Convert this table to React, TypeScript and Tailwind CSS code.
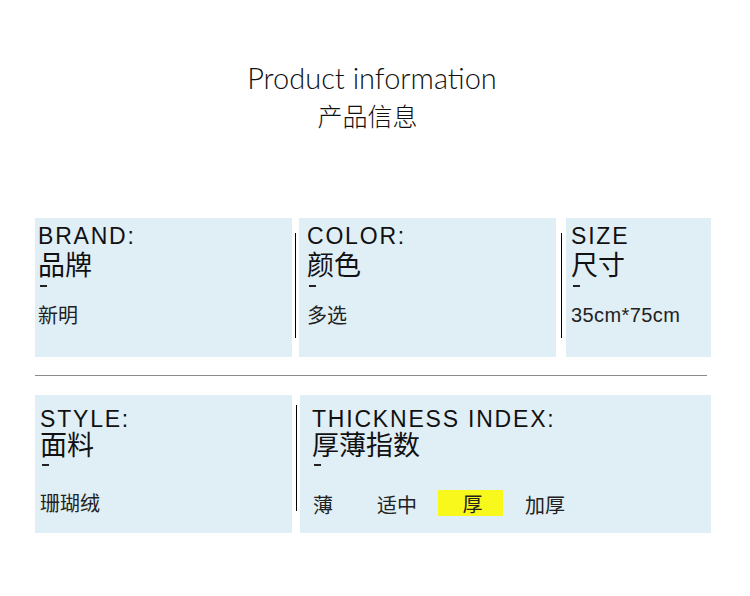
import React from "react";

const latin = "font-['Liberation_Sans',Arial,sans-serif]";
const cjk = "font-['Noto_Sans_CJK_SC','Noto_Sans',sans-serif]";

type PanelProps = {
  en: string;
  zh: string;
  value?: React.ReactNode;
  className: string;
  pad: string;
  row2?: boolean;
};

const Panel = ({ en, zh, value, className, pad, row2 }: PanelProps) => (
  <div className={`bg-[#e0eef6] text-[#111] ${className} ${pad} ${row2 ? "pt-[13px]" : "pt-[6px]"}`}>
    <div className={`${latin} text-[23px] tracking-[1.8px] ${row2 ? "leading-[22px]" : "leading-[24px]"}`}>{en}</div>
    <div className={`${cjk} text-[27px] leading-[27px] ${row2 ? "" : "mt-[2px]"}`}>{zh}</div>
    <div className={`flex items-center h-[12px] pl-[2px] ${row2 ? "mt-[2px]" : "mt-[3px]"}`}>
      <div className="w-[7px] h-[1.5px] bg-[#222]" />
    </div>
    <div className={row2 ? "mt-[20px]" : "mt-[11px]"}>{value}</div>
  </div>
);

const VLine = ({ w, top, h }: { w: string; top: string; h: string }) => (
  <div className={`flex justify-center ${w}`}>
    <div className={`w-px bg-black ${top} ${h}`} />
  </div>
);

const options = ["薄", "适中", "厚", "加厚"];

export default function App() {
  return (
    <div className="w-[750px] h-[596px] bg-white overflow-hidden">
      <div className="pt-[63px] pr-[6px] text-center font-['Lato',sans-serif] font-light text-[29px] leading-[30px] text-[#111]">
        Product information
      </div>
      <div className={`mt-[7px] pr-[15px] text-center ${cjk} font-light text-[25px] leading-[30px] text-[#111]`}>
        产品信息
      </div>

      <div className="mt-[88px] pl-[35px] flex h-[139px]">
        <Panel
          en="BRAND:"
          zh="品牌"
          className="w-[257px]"
          pad="pl-[3px]"
          value={<div className={`${cjk} text-[20px] leading-[24px] text-[#222]`}>新明</div>}
        />
        <VLine w="w-[7px]" top="mt-[15px]" h="h-[105px]" />
        <Panel
          en="COLOR:"
          zh="颜色"
          className="w-[257px]"
          pad="pl-[8px]"
          value={<div className={`${cjk} text-[20px] leading-[24px] text-[#222]`}>多选</div>}
        />
        <VLine w="w-[10px]" top="mt-[15px]" h="h-[105px]" />
        <Panel
          en="SIZE"
          zh="尺寸"
          className="w-[145px]"
          pad="pl-[5px]"
          value={<div className={`${latin} text-[20px] leading-[24px] tracking-[0.4px] text-[#222]`}>35cm*75cm</div>}
        />
      </div>

      <div className="mt-[18px] ml-[35px] w-[672px] h-px bg-[#8a8a8a]" />

      <div className="mt-[19px] pl-[35px] flex h-[138px]">
        <Panel
          en="STYLE:"
          zh="面料"
          className="w-[257px]"
          pad="pl-[5px]"
          row2
          value={<div className={`${cjk} text-[20px] leading-[24px] text-[#222]`}>珊瑚绒</div>}
        />
        <VLine w="w-[8px]" top="mt-[10px]" h="h-[106px]" />
        <Panel
          en="THICKNESS INDEX:"
          zh="厚薄指数"
          className="w-[411px]"
          pad="pl-[12px]"
          row2
          value={
            <div className={`${cjk} text-[20px] leading-[24px] text-[#222] flex items-center -mt-[2px]`}>
              <span className="ml-[1px] w-[64px] pt-[4px]">{options[0]}</span>
              <span className="w-[61px] pt-[4px]">{options[1]}</span>
              <span className="w-[65px] h-[26px] bg-[#f8f81c] flex items-center justify-center pl-[4px] pt-[2px]">{options[2]}</span>
              <span className="ml-[22px] pt-[4px]">{options[3]}</span>
            </div>
          }
        />
      </div>
    </div>
  );
}
